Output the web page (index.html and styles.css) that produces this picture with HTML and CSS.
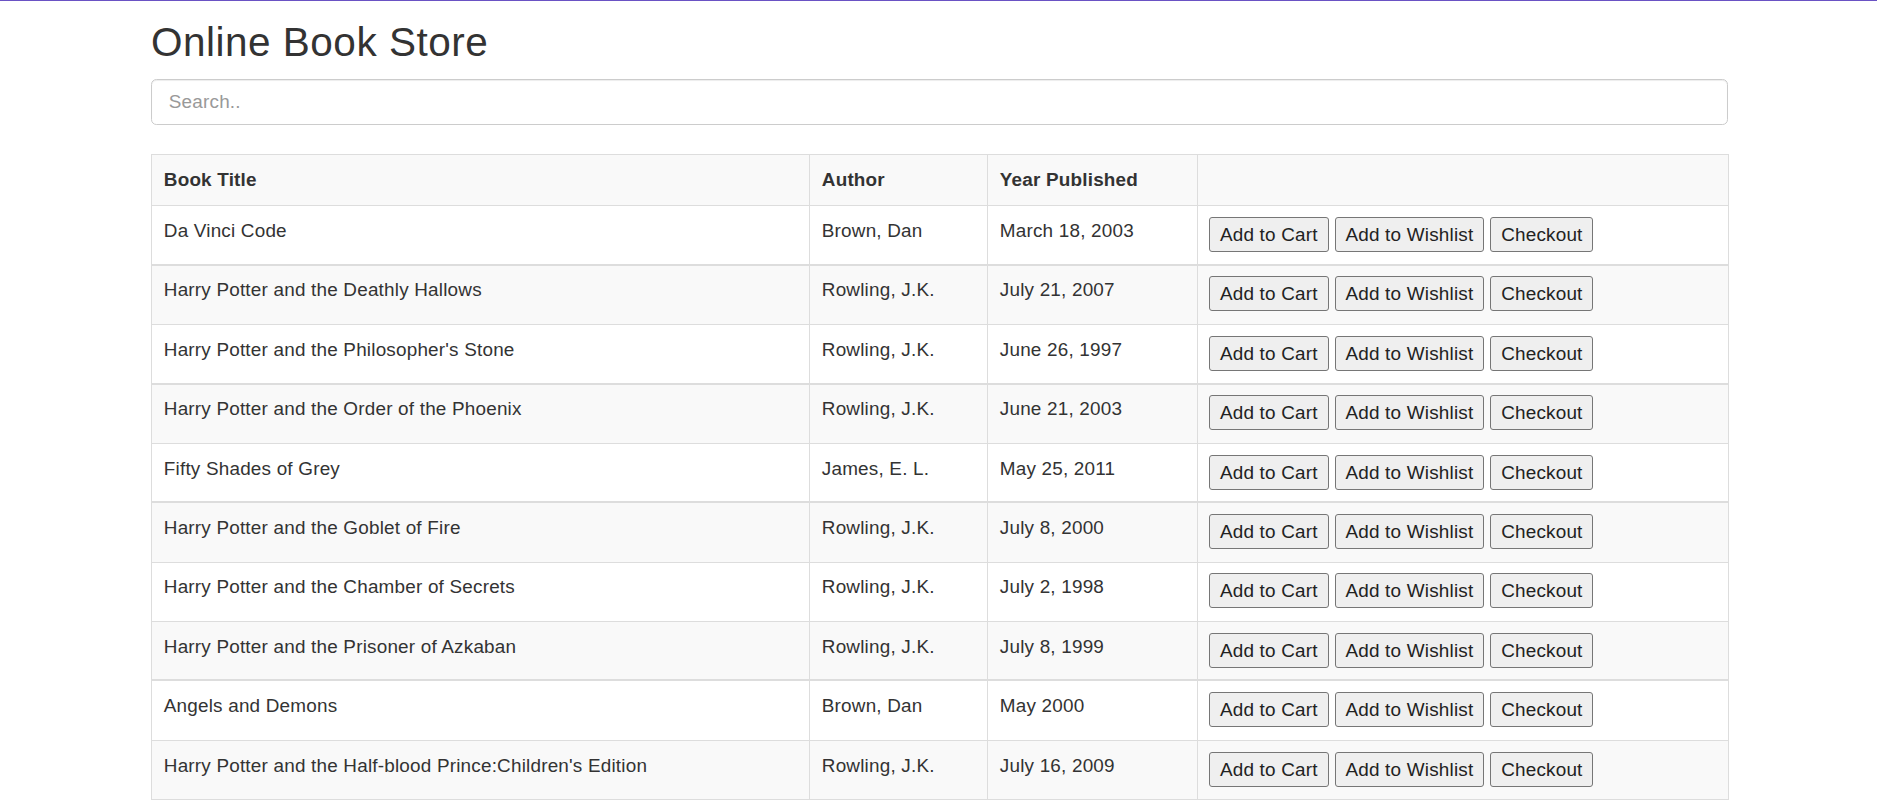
FILE: index.html
```html
<!DOCTYPE html>
<html lang="en">
<head>
<meta charset="utf-8">
<title>Online Book Store</title>
<link rel="stylesheet" href="styles.css">
</head>
<body>
<div class="container">
  <h2 class="page-title">Online Book Store</h2>
  <input class="search" type="text" placeholder="Search..">
  <table class="books">
    <colgroup>
      <col class="c-title">
      <col class="c-author">
      <col class="c-year">
      <col class="c-actions">
    </colgroup>
    <tbody>
      <tr class="head">
        <th>Book Title</th>
        <th>Author</th>
        <th>Year Published</th>
        <th></th>
      </tr>
      <tr class="sep">
        <td>Da Vinci Code</td><td>Brown, Dan</td><td>March 18, 2003</td>
        <td><div class="actions"><button>Add to Cart</button><button>Add to Wishlist</button><button>Checkout</button></div></td>
      </tr>
      <tr class="alt">
        <td>Harry Potter and the Deathly Hallows</td><td>Rowling, J.K.</td><td>July 21, 2007</td>
        <td><div class="actions"><button>Add to Cart</button><button>Add to Wishlist</button><button>Checkout</button></div></td>
      </tr>
      <tr class="sep">
        <td>Harry Potter and the Philosopher's Stone</td><td>Rowling, J.K.</td><td>June 26, 1997</td>
        <td><div class="actions"><button>Add to Cart</button><button>Add to Wishlist</button><button>Checkout</button></div></td>
      </tr>
      <tr class="alt">
        <td>Harry Potter and the Order of the Phoenix</td><td>Rowling, J.K.</td><td>June 21, 2003</td>
        <td><div class="actions"><button>Add to Cart</button><button>Add to Wishlist</button><button>Checkout</button></div></td>
      </tr>
      <tr class="sep">
        <td>Fifty Shades of Grey</td><td>James, E. L.</td><td>May 25, 2011</td>
        <td><div class="actions"><button>Add to Cart</button><button>Add to Wishlist</button><button>Checkout</button></div></td>
      </tr>
      <tr class="alt">
        <td>Harry Potter and the Goblet of Fire</td><td>Rowling, J.K.</td><td>July 8, 2000</td>
        <td><div class="actions"><button>Add to Cart</button><button>Add to Wishlist</button><button>Checkout</button></div></td>
      </tr>
      <tr>
        <td>Harry Potter and the Chamber of Secrets</td><td>Rowling, J.K.</td><td>July 2, 1998</td>
        <td><div class="actions"><button>Add to Cart</button><button>Add to Wishlist</button><button>Checkout</button></div></td>
      </tr>
      <tr class="alt sep">
        <td>Harry Potter and the Prisoner of Azkaban</td><td>Rowling, J.K.</td><td>July 8, 1999</td>
        <td><div class="actions"><button>Add to Cart</button><button>Add to Wishlist</button><button>Checkout</button></div></td>
      </tr>
      <tr>
        <td>Angels and Demons</td><td>Brown, Dan</td><td>May 2000</td>
        <td><div class="actions"><button>Add to Cart</button><button>Add to Wishlist</button><button>Checkout</button></div></td>
      </tr>
      <tr class="alt">
        <td>Harry Potter and the Half-blood Prince:Children's Edition</td><td>Rowling, J.K.</td><td>July 16, 2009</td>
        <td><div class="actions"><button>Add to Cart</button><button>Add to Wishlist</button><button>Checkout</button></div></td>
      </tr>
    </tbody>
  </table>
</div>
</body>
</html>
```

FILE: styles.css
```css
* {
  box-sizing: border-box;
}

html, body {
  margin: 0;
  padding: 0;
  background: #fff;
}

body {
  border-top: 1px solid #6a52c4;
  font-family: "Liberation Sans", Arial, sans-serif;
  font-size: 18.9px;
  line-height: 27px;
  color: #333;
  letter-spacing: 0.2px;
}

.container {
  width: 1577px;
  margin-left: 151px;
}

.page-title {
  margin: 19.4px 0 14.5px;
  font-size: 40.5px;
  line-height: 44.55px;
  font-weight: 400;
  letter-spacing: 0.5px;
  color: #333;
}

.search {
  display: block;
  width: 100%;
  height: 46px;
  margin: 0 0 28.7px;
  padding: 0 16.8px;
  font-family: inherit;
  font-size: 18.9px;
  letter-spacing: 0.2px;
  color: #555;
  background: #fff;
  border: 1px solid #ccc;
  border-radius: 5.4px;
  box-shadow: inset 0 1px 1px rgba(0, 0, 0, 0.075);
  outline: none;
}

.search::placeholder {
  color: #999;
}

.books {
  width: 100%;
  table-layout: fixed;
  border-collapse: collapse;
  border: 1px solid #ddd;
}

.c-title { width: 658px; }
.c-author { width: 178px; }
.c-year { width: 210px; }
.c-actions { width: 531px; }

.books th,
.books td {
  border: 1px solid #ddd;
  text-align: left;
  vertical-align: top;
  padding: 10.8px 10.8px 12.5px 11.8px;
}

.books th {
  font-weight: 700;
  padding-bottom: 12.2px;
}

.books tr.head {
  background: #f9f9f9;
}

.books tr.alt {
  background: #f9f9f9;
}

.books tr.sep td {
  border-bottom-width: 2px;
  padding-bottom: 11.75px;
}

.books td:last-child {
  padding-left: 11px;
}

.actions {
  display: flex;
  gap: 6px;
}

.actions button {
  height: 35px;
  margin: 0;
  padding: 3px 9.9px;
  font-family: inherit;
  font-size: 18.9px;
  line-height: 27px;
  letter-spacing: 0.2px;
  color: #222;
  background: #efefef;
  border: 1px solid #767676;
  border-radius: 3px;
}
```
